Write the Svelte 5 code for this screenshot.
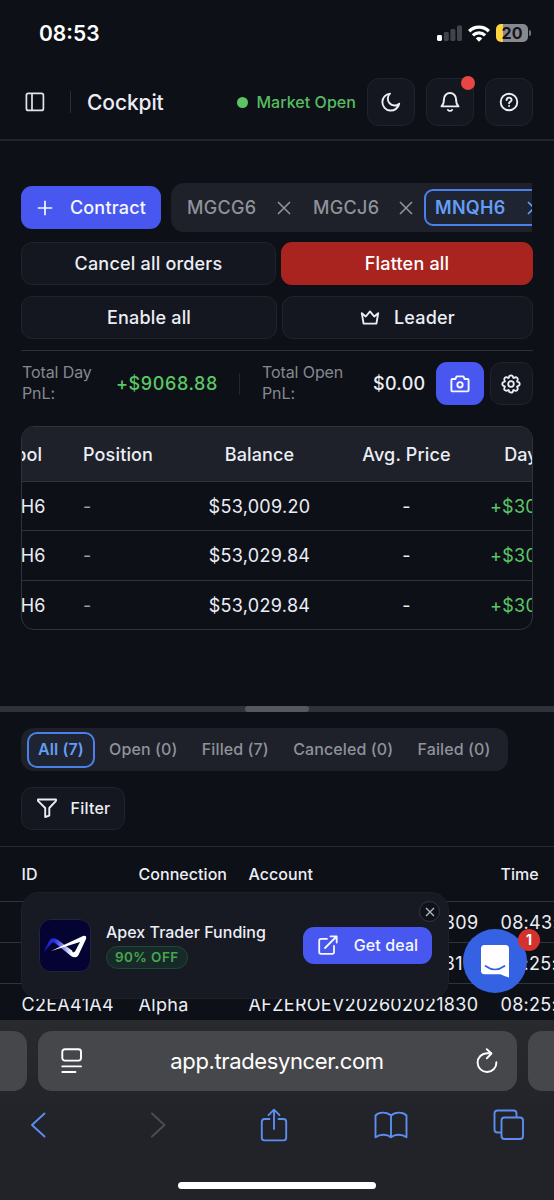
<script lang="ts">
	const contracts = [
		{ symbol: 'MGCG6', active: false },
		{ symbol: 'MGCJ6', active: false },
		{ symbol: 'MNQH6', active: true }
	];

	const accounts = [
		{ symbol: 'MNQH6', position: '-', balance: '$53,009.20', avg: '-', pnl: '+$3009.20' },
		{ symbol: 'MNQH6', position: '-', balance: '$53,029.84', avg: '-', pnl: '+$3029.84' },
		{ symbol: 'MNQH6', position: '-', balance: '$53,029.84', avg: '-', pnl: '+$3029.84' }
	];

	const orders = [
		{ id: 'C2EA41A6', connection: 'Alpha', account: 'AFZEROEV202602021809', time: '08:43:12' },
		{ id: 'C2EA41A5', connection: 'Alpha', account: 'AFZEROEV202602021810', time: '08:25:41' },
		{ id: 'C2EA41A4', connection: 'Alpha', account: 'AFZEROEV202602021830', time: '08:25:41' }
	];

	const filters = [
		{ key: 'all', label: 'All (7)' },
		{ key: 'open', label: 'Open (0)' },
		{ key: 'filled', label: 'Filled (7)' },
		{ key: 'canceled', label: 'Canceled (0)' },
		{ key: 'failed', label: 'Failed (0)' }
	];

	let filter = $state('all');
	let showDeal = $state(true);
</script>

<div class="phone">
	<div class="status">
		<span class="clock">08:53</span>
		<div class="indicators">
			<svg width="26" height="18" viewBox="0 0 26 18">
				<rect x="0" y="11" width="5" height="6" rx="1.4" fill="#fff" />
				<rect x="6.8" y="8" width="5" height="9" rx="1.4" fill="#42444c" />
				<rect x="13.4" y="5" width="5" height="12" rx="1.4" fill="#42444c" />
				<rect x="20" y="1.5" width="5" height="15.5" rx="1.4" fill="#42444c" />
			</svg>
			<svg class="wifi" width="22" height="17" viewBox="0 0 22 17" fill="none" stroke="#fff" stroke-width="3.3">
				<path d="M1.2 6.2a14 14 0 0 1 19.6 0" />
				<path d="M4.9 10.4a8.7 8.7 0 0 1 12.2 0" />
				<path d="M11 16.7l-3.2-3.3a4.6 4.6 0 0 1 6.4 0z" fill="#fff" stroke="none" />
			</svg>
			<div class="battery"><span>20</span></div>
			<i class="nub"></i>
		</div>
	</div>

	<header>
		<svg width="20" height="20" viewBox="0 0 20 20" fill="none" stroke="#e3e5ee" stroke-width="1.7">
			<rect x="1.4" y="1.4" width="17" height="17" rx="2" />
			<path d="M7 1.4v17" />
		</svg>
		<i class="sep"></i>
		<h1>Cockpit</h1>
		<span class="market"><i></i>Market Open</span>
		<button class="square" aria-label="Dark mode">
			<svg width="24" height="24" viewBox="0 0 24 24" fill="none" stroke="currentColor" stroke-width="1.9" stroke-linejoin="round">
				<path d="M11 3.6a8.5 8.5 0 1 0 9.2 10.1 6.8 6.8 0 0 1-9.2-10.1z" />
			</svg>
		</button>
		<button class="square" aria-label="Notifications">
			<svg width="24" height="24" viewBox="0 0 24 24" fill="none" stroke="currentColor" stroke-width="1.9" stroke-linejoin="round" stroke-linecap="round">
				<path d="M12 3a6 6 0 0 0-6 6c0 4.2-1.1 6-2.5 7.4h17C19.1 15 18 13.2 18 9a6 6 0 0 0-6-6z" />
				<path d="M10 19.9c.8 1.3 3.2 1.3 4 0" />
			</svg>
			<i class="alert"></i>
		</button>
		<button class="square" aria-label="Help">
			<svg width="24" height="24" viewBox="0 0 24 24" fill="none" stroke="currentColor" stroke-width="1.9">
				<circle cx="12" cy="12" r="8.3" />
				<path d="M9.6 10.1c0-3.2 5-3.2 5-.2 0 1.7-2.5 1.7-2.5 3.4" stroke-linecap="round" />
				<circle cx="12.1" cy="16" r=".6" fill="currentColor" stroke-width="1" />
			</svg>
		</button>
	</header>

	<main>
		<div class="row contracts">
			<button class="primary add">
				<svg width="16" height="16" viewBox="0 0 16 16" stroke="currentColor" stroke-width="1.7"><path d="M8 .8v14.4M.8 8h14.4" /></svg>
				Contract
			</button>
			<div class="strip">
				{#each contracts as c}
					<div class="contract" class:active={c.active}>
						<span>{c.symbol}</span>
						<svg width="14" height="14" viewBox="0 0 14 14" stroke="currentColor" stroke-width="1.6"><path d="M1 1l12 12M13 1L1 13" /></svg>
					</div>
				{/each}
			</div>
		</div>
		<div class="row orders-row">
			<button class="btn">Cancel all orders</button>
			<button class="btn danger">Flatten all</button>
		</div>
		<div class="row leader-row">
			<button class="btn">Enable all</button>
			<button class="btn">
				<svg width="20" height="16" viewBox="0 0 20 16" fill="none" stroke="currentColor" stroke-width="1.9" stroke-linejoin="round">
					<path d="M1.8 3.2l4 3.3L10 1.4l4.2 5.1 4-3.3-1.8 10.4H3.6z" />
				</svg>
				Leader
			</button>
		</div>

		<div class="totals">
			<span class="label">Total Day<br />PnL:</span>
			<span class="value gain">+$9068.88</span>
			<i class="sep"></i>
			<span class="label open">Total Open<br />PnL:</span>
			<span class="value zero">$0.00</span>
			<button class="primary camera" aria-label="Screenshot">
				<svg width="20" height="18" viewBox="0 0 20 18" fill="none" stroke="currentColor" stroke-width="1.9" stroke-linejoin="round">
					<path d="M1.4 5.2q0-1.2 1.2-1.2h2.8l1.2-2.6h6.8L14.6 4h2.8q1.2 0 1.2 1.2v10q0 1.2-1.2 1.2H2.6q-1.2 0-1.2-1.2z" />
					<circle cx="10" cy="9.8" r="2.7" />
				</svg>
			</button>
			<button class="btn gear" aria-label="Settings">
				<svg width="20" height="20" viewBox="0 0 20 20" fill="none" stroke="currentColor" stroke-width="1.8" stroke-linejoin="round">
					<path d="M7.700 3.800Q8.200 1.300 10 1.300T12.300 3.800L12.800 4Q14.900 2.600 16.200 3.800T16 7.200L16.200 7.700Q18.700 8.200 18.700 10T16.200 12.300L16 12.800Q17.400 14.900 16.200 16.200T12.800 16L12.300 16.200Q11.800 18.700 10 18.700T7.700 16.200L7.200 16Q5.100 17.400 3.800 16.200T4 12.800L3.800 12.300Q1.300 11.800 1.300 10T3.800 7.700L4 7.200Q2.600 5.100 3.800 3.800T7.200 4z" />
					<circle cx="10" cy="10" r="2.800" />
				</svg>
			</button>
		</div>

		<div class="table">
			<div class="tr head">
				<span class="symbol">Symbol</span><span class="left">Position</span><span>Balance</span><span>Avg. Price</span><span>Day PnL</span>
			</div>
			{#each accounts as a}
				<div class="tr">
					<span class="cell">{a.symbol}</span><span class="left dim">{a.position}</span><span>{a.balance}</span><span>{a.avg}</span><span class="gain cell">{a.pnl}</span>
				</div>
			{/each}
		</div>
	</main>

	<div class="resizer"><i></i></div>

	<section class="orders">
		<div class="filters">
			{#each filters as f}
				<button class:active={filter === f.key} onclick={() => (filter = f.key)}>{f.label}</button>
			{/each}
		</div>
		<button class="btn filter">
			<svg width="20" height="20" viewBox="0 0 20 20" fill="none" stroke="currentColor" stroke-width="1.9" stroke-linejoin="round">
				<path d="M1 1.500h18v1.400L12.300 10v7.600L8.200 19v-9L1 2.900z" />
			</svg>
			Filter
		</button>
		<div class="log">
			<div class="line head"><span>ID</span><span>Connection</span><span>Account</span><span>Time</span></div>
			{#each orders as o}
				<div class="line"><span>{o.id}</span><span>{o.connection}</span><span>{o.account}</span><span>{o.time}</span></div>
			{/each}
		</div>
	</section>

	<footer>
		<div class="tabs">
			<div class="tab edge"></div>
			<div class="tab address">
				<svg width="22" height="26" viewBox="0 0 22 26" fill="none" stroke="#fff" stroke-width="1.9" stroke-linecap="round">
					<rect x="1.300" y="1.200" width="18.700" height="11.400" rx="2.500" />
					<path d="M1.300 18.400H20M1.300 24H14.500" />
				</svg>
				<span>app.tradesyncer.com</span>
				<svg width="22" height="26" viewBox="0 0 22 26" fill="none" stroke="#fff" stroke-width="1.9" stroke-linecap="round" stroke-linejoin="round">
					<path d="M20.400 14.200A9.400 9.400 0 1 1 11 5.200h4" />
					<path d="M10.800 1.200l4.600 4.300-4.600 4.800" />
				</svg>
			</div>
			<div class="tab edge"></div>
		</div>
		<nav>
			<svg class="back" width="16" height="26" viewBox="0 0 16 26"><path d="M14.500 1.500L2 13l12.500 11.500" /></svg>
			<svg class="forward" width="16" height="26" viewBox="0 0 16 26"><path d="M2 1.500L14.500 13 2 24.500" /></svg>
			<svg class="share" width="28" height="34" viewBox="0 0 28 34"><path d="M9.500 11H4.500Q1.800 11 1.800 13.700V29.800Q1.800 32.400 4.500 32.400H23.500Q26.200 32.400 26.200 29.800V13.700Q26.200 11 23.500 11H18.500M14 21V2M8.500 7.200L14 1.700l5.500 5.500" /></svg>
			<svg class="book" width="34" height="28" viewBox="0 0 34 28"><path d="M17 4.500C13 .8 5 .5 1.500 4.500V26.300C6 23 13 22.800 17 26.300 21 22.800 28 23 32.500 26.300V4.500C29 .5 21 .8 17 4.500V26" /></svg>
			<svg width="32" height="32" viewBox="0 0 32 32"><path d="M7.500 23.500H4.500Q1.500 23.500 1.500 20.500V4.500Q1.500 1.500 4.500 1.500H20.500Q23.500 1.500 23.500 4.500V7.500" /><rect x="8.500" y="8.500" width="21.500" height="21.500" rx="3" /></svg>
		</nav>
		<i class="home"></i>
	</footer>

	{#if showDeal}
		<aside class="deal">
			<svg width="52" height="53" viewBox="0 0 52 53">
				<defs>
					<linearGradient id="wave" x1="0" x2="1">
						<stop offset="0" stop-color="#1218a8" />
						<stop offset=".35" stop-color="#2530e8" />
						<stop offset=".65" stop-color="#8d95f0" />
						<stop offset=".9" stop-color="#fff" />
					</linearGradient>
				</defs>
				<rect x=".5" y=".5" width="51" height="52" rx="11" fill="#040331" stroke="#20243c" />
				<path d="M4.500 33.500L9.500 23Q12.500 16.500 19 21L33 31.500 36 38Q34 38.500 32 37L16.500 24.500Q14 22.500 12 25z" fill="url(#wave)" />
				<path d="M12 32L44 17Q48 16 47 20L39.500 36Q37.500 39.500 34 37.500L33 34 36 32.500 41 23z" fill="#fff" />
			</svg>
			<div class="info">
				<strong>Apex Trader Funding</strong>
				<em>90% OFF</em>
			</div>
			<button class="primary get">
				<svg width="20" height="20" viewBox="0 0 20 20" fill="none" stroke="currentColor" stroke-width="1.8" stroke-linecap="round" stroke-linejoin="round">
					<path d="M9 3.800H3Q1.200 3.800 1.200 5.600V17Q1.200 18.800 3 18.800H14.300Q16 18.800 16 17V11M7 13L18.500 1.500M12.500 1.300H18.700V7.500" />
				</svg>
				Get deal
			</button>
			<button class="close" aria-label="Close" onclick={() => (showDeal = false)}>
				<svg width="10" height="10" viewBox="0 0 10 10" stroke="currentColor" stroke-width="1.4"><path d="M1 1l8 8M9 1L1 9" /></svg>
			</button>
		</aside>
	{/if}

	<div class="chat">
		<svg width="30" height="34" viewBox="0 0 30 34">
			<path d="M4.500 1H25.500Q29 1 29 4.500V33.500Q24 32 20.500 30.300H4.500Q1 30.300 1 26.800V4.500Q1 1 4.500 1z" fill="#fff" />
			<path d="M5.500 22Q15 29 24.500 22" fill="none" stroke="#3562e3" stroke-width="1.7" stroke-linecap="round" />
		</svg>
		<b>1</b>
	</div>
</div>

<style>
	:global(body) {
		background: #0e1018;
	}

	.phone, .phone * {
		box-sizing: border-box;
	}

	.phone {
		position: relative;
		display: flex;
		flex-direction: column;
		width: 554px;
		height: 1200px;
		overflow: hidden;
		background: #0e1018;
		color: #eceef5;
		font-family: Inter, 'Liberation Sans', sans-serif;
		font-size: 18px;
	}

	svg {
		display: block;
		flex: none;
	}

	button {
		display: flex;
		align-items: center;
		justify-content: center;
		padding: 0;
		border: 0;
		font: inherit;
		letter-spacing: inherit;
		color: inherit;
		white-space: nowrap;
	}

	.status {
		display: flex;
		justify-content: space-between;
		align-items: center;
		height: 65px;
		padding: 1px 23px 0 39px;
	}

	.clock {
		font-size: 21px;
		font-weight: 600;
		color: #fff;
	}

	.indicators {
		display: flex;
		align-items: center;
	}

	.wifi {
		margin: 0 6px 0 5px;
	}

	.battery {
		width: 32px;
		height: 18px;
		border-radius: 5px;
		background: linear-gradient(90deg, #fdd63f 7px, #88898e 7px);
		color: #14151b;
		font-size: 16px;
		font-weight: 700;
		line-height: 18px;
		text-align: center;
	}

	.nub {
		width: 2px;
		height: 6px;
		margin-left: 1px;
		border-radius: 0 2px 2px 0;
		background: #74757b;
	}

	header {
		display: flex;
		align-items: center;
		height: 76px;
		padding: 0 21px 0 25px;
		border-bottom: 2px solid #22252d;
	}

	.sep {
		width: 1px;
		height: 22px;
		background: #2b2e37;
	}

	header .sep {
		margin: 0 16px 0 25px;
	}

	h1 {
		margin: 0;
		font-size: 21px;
		font-weight: 500;
		letter-spacing: -0.1px;
	}

	.market {
		display: flex;
		align-items: center;
		gap: 8px;
		margin-left: auto;
		color: #56bd60;
		font-size: 16px;
		font-weight: 500;
		letter-spacing: 0.05px;
	}

	.market i {
		width: 11px;
		height: 11px;
		border-radius: 50%;
		background: #5cc465;
	}

	.square {
		position: relative;
		width: 48px;
		height: 48px;
		margin-left: 11px;
		border: 1px solid #20232b;
		border-radius: 12px;
		background: #14171f;
	}

	.alert {
		position: absolute;
		top: -3px;
		right: -2px;
		width: 14px;
		height: 14px;
		border-radius: 50%;
		background: #e84545;
	}

	main {
		display: flex;
		flex-direction: column;
		height: 565px;
		padding: 42px 21px 0;
		letter-spacing: 0.3px;
	}

	.row {
		display: flex;
		font-weight: 500;
		letter-spacing: 0.2px;
	}

	.primary {
		border-radius: 11px;
		background: #4857ef;
		color: #f6f7ff;
	}

	.contracts {
		align-items: center;
		gap: 10px;
	}

	.add {
		width: 140px;
		height: 43px;
		padding-left: 1px;
		gap: 17px;
	}

	.strip {
		display: flex;
		align-items: center;
		width: 361px;
		height: 49px;
		padding-left: 6px;
		overflow: hidden;
		border-radius: 13px 0 0 13px;
		background: #1e2129;
		color: #8f929a;
		letter-spacing: 0.3px;
	}

	.contract {
		display: flex;
		flex: none;
		align-items: center;
		justify-content: space-between;
		width: 124px;
		height: 37px;
		padding: 0 10px;
	}

	.contract + .contract {
		width: 120px;
		margin-left: 2px;
	}

	.contract + .contract.active {
		width: 128px;
		margin-left: 1px;
		padding: 0 9px;
		border: 2px solid #4b80ea;
		border-radius: 9px;
		background: #1e2431;
		color: #659df4;
		font-weight: 600;
	}

	.orders-row {
		gap: 5px;
		margin-top: 10px;
	}

	.leader-row {
		gap: 5px;
		margin-top: 11px;
	}

	.btn {
		height: 43px;
		border: 1px solid #20232b;
		border-radius: 11px;
		background: #14171f;
	}

	.orders-row .btn {
		width: 255px;
	}

	.orders-row .danger {
		width: 252px;
		border: 0;
		background: #aa241f;
		color: #fff;
	}

	.leader-row .btn {
		gap: 14px;
		width: 256px;
	}

	.leader-row .btn + .btn {
		width: 251px;
	}

	.totals {
		display: flex;
		align-items: center;
		height: 66px;
		margin-top: 11px;
		border-top: 1px solid #2d3038;
	}

	.totals .label {
		width: 95px;
		padding: 0 0 1px 1px;
		color: #858890;
		font-size: 16px;
		line-height: 21px;
		letter-spacing: -0.1px;
	}

	.totals .sep {
		margin: 0 22px;
		background: #242730;
	}

	.gain {
		color: #5bc866;
	}

	.totals .gain {
		width: 101px;
		font-weight: 500;
		letter-spacing: 0.6px;
	}

	.totals .open {
		width: 111px;
		padding-left: 0;
	}

	.zero {
		width: 63px;
		font-weight: 500;
	}

	.camera {
		width: 48px;
		height: 43px;
	}

	.gear {
		width: 43px;
		margin-left: 6px;
		padding-right: 1px;
	}

	.table {
		height: 204px;
		margin-top: 9.5px;
		overflow: hidden;
		border: 1px solid #30333b;
		border-radius: 13px;
	}

	.tr {
		display: grid;
		grid-template-columns: 100px 124px 147px 147px 120px;
		align-items: center;
		width: 638px;
		height: 49.5px;
		margin-left: -60px;
		padding-top: 1px;
		text-align: center;
	}

	.tr + .tr {
		border-top: 1px solid #30333b;
	}

	.tr.head {
		height: 54px;
		background: #1e2129;
		font-weight: 500;
		letter-spacing: 0.15px;
	}

	.symbol {
		padding-right: 5px;
	}

	.cell {
		padding-right: 2px;
	}

	.left {
		padding-left: 21px;
		text-align: left;
	}

	.dim {
		color: #9b9ea6;
	}

	.resizer {
		height: 6px;
		background: #30323b;
	}

	.resizer i {
		display: block;
		width: 64px;
		height: 6px;
		margin: 0 auto;
		border-radius: 3px;
		background: #555761;
	}

	.orders {
		height: 308px;
		padding-top: 16px;
		overflow: hidden;
	}

	.filters {
		display: flex;
		align-items: center;
		width: 487px;
		height: 43px;
		margin-left: 21px;
		padding-left: 6px;
		border-radius: 13px;
		background: #1e2129;
		color: #8f929a;
		font-size: 16px;
		font-weight: 500;
		letter-spacing: 0.1px;
	}

	.filters button {
		height: 36px;
		padding: 0 10.2px 1px;
		border: 2px solid transparent;
		border-radius: 10px;
		background: transparent;
	}

	.filters .active {
		margin-right: 2px;
		padding: 0 9px 1px;
		border-color: #4b80ea;
		background: #1e2431;
		color: #659df4;
		font-weight: 600;
	}

	.filter {
		gap: 14px;
		width: 104px;
		margin: 16px 0 0 21px;
		padding: 0 0 1px 1px;
		font-size: 16px;
		font-weight: 500;
		letter-spacing: 0.2px;
	}

	.log {
		margin-top: 16px;
		border-top: 1px solid #252830;
	}

	.line {
		display: grid;
		grid-template-columns: 117px 110px 252px 120px;
		align-items: center;
		height: 41.3px;
		padding: 1px 0 0 21.5px;
		border-bottom: 1px solid #30333b;
		white-space: nowrap;
		letter-spacing: 0.3px;
	}

	.line.head {
		height: 54.5px;
		padding-top: 0;
		font-size: 16px;
		font-weight: 500;
		letter-spacing: 0.05px;
	}

	footer {
		position: relative;
		height: 180px;
		padding-top: 11px;
		background: linear-gradient(#292a2e, #222328 60%);
	}

	.tabs {
		display: flex;
		gap: 11px;
		height: 60px;
	}

	.tab {
		border-radius: 14px;
		background: #46474b;
	}

	.edge {
		flex: 1;
		border-radius: 0 14px 14px 0;
	}

	.edge:last-child {
		border-radius: 14px 0 0 14px;
	}

	.address {
		display: flex;
		align-items: center;
		justify-content: space-between;
		width: 479px;
		padding: 0 18px 0 23px;
		color: #fff;
		font-size: 22px;
		letter-spacing: -0.37px;
	}

	.address span {
		margin-right: 5px;
	}

	nav {
		display: flex;
		align-items: center;
		height: 68px;
		padding-left: 30px;
		fill: none;
		stroke: #5c8df0;
		stroke-width: 1.9;
		stroke-linejoin: round;
		stroke-linecap: round;
	}

	.back {
		margin-right: 104px;
	}

	.forward {
		margin-right: 94px;
		stroke: #4c4d52;
	}

	.share {
		margin-right: 86px;
	}

	.book {
		margin-right: 85px;
	}

	.home {
		position: absolute;
		left: 178px;
		bottom: 11px;
		width: 198px;
		height: 7px;
		border-radius: 4px;
		background: #fff;
	}

	.deal {
		position: absolute;
		left: 21px;
		top: 892px;
		display: flex;
		align-items: center;
		width: 428px;
		height: 107px;
		padding: 0 16px 0 17px;
		border: 1px solid #1e212a;
		border-radius: 18px;
		background: #171923;
	}

	.info {
		display: flex;
		flex-direction: column;
		align-items: flex-start;
		gap: 3px;
		margin: 0 0 1px 15px;
	}

	.info strong {
		font-size: 16px;
		font-weight: 500;
		line-height: 22px;
		letter-spacing: 0.02px;
		white-space: nowrap;
	}

	.info em {
		height: 23px;
		padding: 0 8px;
		border: 1px solid #1d4a35;
		border-radius: 12px;
		background: #172a29;
		color: #47a64d;
		font-size: 13.5px;
		font-style: normal;
		font-weight: 600;
		line-height: 21px;
		letter-spacing: 0.4px;
	}

	.get {
		gap: 16px;
		width: 129px;
		height: 37px;
		margin-left: auto;
		padding: 0 0 1px 1px;
		font-size: 16px;
		font-weight: 500;
		letter-spacing: 0.1px;
	}

	.close {
		position: absolute;
		top: 8px;
		right: 8px;
		width: 21px;
		height: 21px;
		border: 1px solid #343740;
		border-radius: 50%;
		background: #101219;
		color: #b3b5bd;
	}

	.chat {
		position: absolute;
		left: 463px;
		top: 929px;
		display: flex;
		align-items: center;
		justify-content: center;
		width: 64px;
		height: 64px;
		border-radius: 50%;
		background: #3562e3;
	}

	.chat b {
		position: absolute;
		top: 0;
		right: -13px;
		width: 22px;
		height: 22px;
		border-radius: 50%;
		background: #d5322f;
		color: #fff;
		font-size: 14px;
		line-height: 22px;
		text-align: center;
	}
</style>
